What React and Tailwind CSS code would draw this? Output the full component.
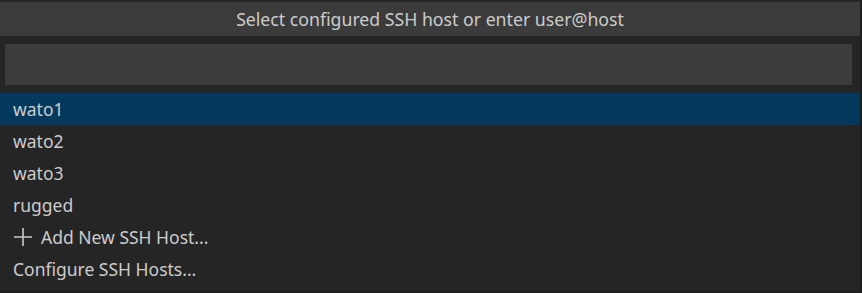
import React from 'react';

const hosts = ['wato1', 'wato2', 'wato3', 'rugged'];

const PlusIcon = () => (
  <svg width="20" height="20" viewBox="0 0 20 20" className="mr-[8px] shrink-0">
    <path d="M10 1v18M1 10h18" stroke="#cccccc" strokeWidth="1.6" fill="none" />
  </svg>
);

const Row = ({ children, active }) => (
  <div
    className={`h-[32px] flex items-center pl-[13px] text-[17.5px] text-[#cccccc] ${active ? 'bg-[#04395e]' : ''}`}
  >
    {children}
  </div>
);

const App = () => {
  return (
    <div className="w-[862px] h-[293px] bg-[#1e1e1e] overflow-hidden" style={{ fontFamily: '"Noto Sans", "Open Sans", sans-serif' }}>
      <div className="w-[860px] h-[291px] bg-[#252526] pt-[2px] flex flex-col">
        <div className="h-[34px] bg-[#3b3b3b] flex items-center justify-center text-[17.7px] text-[#cccccc]">
          Select configured SSH host or enter user@host
        </div>
        <div className="px-[5px] pt-[8px] pb-[8px]">
          <div className="h-[41px] w-[847px] bg-[#3c3c3c]" />
        </div>
        <div className="flex flex-col">
          {hosts.map((h, i) => (
            <Row key={h} active={i === 0}>{h}</Row>
          ))}
          <Row>
            <PlusIcon />
            Add New SSH Host...
          </Row>
          <Row>Configure SSH Hosts...</Row>
        </div>
      </div>
    </div>
  );
};

export default App;
